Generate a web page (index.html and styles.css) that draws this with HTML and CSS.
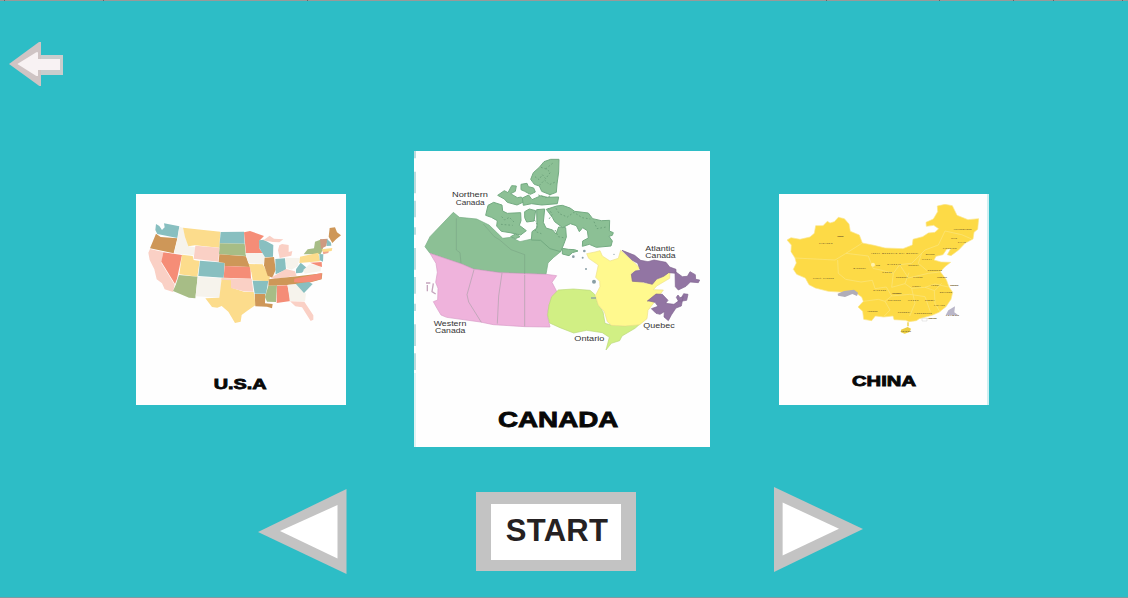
FILE: index.html
```html
<!DOCTYPE html>
<html lang="en">
<head>
<meta charset="utf-8">
<title>Choose a country</title>
<link rel="stylesheet" href="styles.css">
</head>
<body>
<div class="screen">
  <header class="top">
    <svg class="ruler" viewBox="0 0 1128 1"><path d="M4 0h1v1h-1zM103 0h1v1h-1zM307 0h1v1h-1zM826 0h1v1h-1zM939 0h1v1h-1zM1013 0h1v1h-1zM1053 0h1v1h-1zM1122 0h1v1h-1z" fill="#666"/></svg>
    <button class="back" aria-label="Back">
      <svg class="back-icon" viewBox="27 123 162 138">
        <path d="M123 165h66v60h-66z" fill="#c9cdcd"/>
        <path d="M27 192L117 126H123V258H118Z" fill="#cfc4c4"/>
        <path d="M52 192L109 157H114V177H180V210H114V228H109Z" fill="#f8f2f3"/>
      </svg>
    </button>
  </header>

  <main class="carousel">
    <article class="card side">
      <svg class="map" viewBox="18 12 630 633">
        <g class="art" stroke-width="1" stroke-linejoin="round">
          <path d="M78 102l10 6 8 12 8-8-2-12 46 9-6 35-60-12-6-12z" fill="#88bfc0"/>
          <path d="M78 131l14 10 50 4-11 45-71-15z" fill="#ce9758"/>
          <path d="M148 110l11 3 7 28 10 28 20 3-4 24-60-6 11-45z" fill="#f6f3ec"/>
          <path d="M159 113l55 6 57 6-3 48-73-7-20 3-10-28z" fill="#fcdc8c"/>
          <path d="M272 126l70-1 2 36-75-1z" fill="#88bfc0"/>
          <path d="M269 160l75 1 4 37-81-5z" fill="#a7bd86"/>
          <path d="M196 167l72 6-3 42-74-9z" fill="#fad0c5"/>
          <path d="M342 127l18-4 42 15-14 14 1 25 10 12-51 1z" fill="#f58d77"/>
          <path d="M60 177l40 9-6 33 40 65-5 22-25-8-8-18-16-12-7-30-14-28-4-22z" fill="#fad0c5"/>
          <path d="M100 187l56 8-15 71-6 16-41-67z" fill="#f58d77"/>
          <path d="M156 194l32 4 3 12 18 3-7 47-54-7z" fill="#fcdc8c"/>
          <path d="M210 212l74 6-3 45-76-5z" fill="#88bfc0"/>
          <path d="M268 193l80 6 12 32-76-3v-9l-18-3z" fill="#ce9758"/>
          <path d="M284 228l77 3 2 35-82-3z" fill="#f58d77"/>
          <path d="M147 255l56 5-7 65-19-2-48-20 8-18z" fill="#a7bd86"/>
          <path d="M203 260l72 5-5 58-73-4z" fill="#f6f3ec"/>
          <path d="M275 265l33 1-3 27 37 12 29 1 6 39-26 18-16 12-3 20-17 4-20-34-20-17-13 5-16-2-20-26 42-2z" fill="#fcdc8c"/>
          <path d="M275 265l90 1 5 39-29-1-38-10v-23l-29-2z" fill="#fad0c5"/>
          <path d="M346 190h51l10 16-7 16-45-2z" fill="#f6f3ec"/>
          <path d="M356 222l42 1 22 40-6 11-46-3-4-24z" fill="#fcdc8c"/>
          <path d="M387 151l14-2 29 16-1 35-24 2-17-28z" fill="#88bfc0"/>
          <path d="M400 151l19-14 13 9 28 2-12 9-20-1z" fill="#fad0c5"/>
          <path d="M448 166l8-4 20 3v21l11-3-3 14-35 7-5-23z" fill="#fad0c5"/>
          <path d="M404 203l28-2 5 38-10 24-14-6-11-31z" fill="#ce9758"/>
          <path d="M436 207l29-2 3 34-31 14z" fill="#88bfc0"/>
          <path d="M466 203l43 1-6 25-18 10-15-5z" fill="#f6f3ec"/>
          <path d="M421 264l47-27 27 7 5 13-65 10z" fill="#fad0c5"/>
          <path d="M368 272l47 1-7 38h-34z" fill="#88bfc0"/>
          <path d="M374 312h32l-1 28 23 2-2 13-15-5-35-1z" fill="#ce9758"/>
          <path d="M415 287l26-1-3 50-27-1-6-14z" fill="#a7bd86"/>
          <path d="M416 268l86-9 75-9-2 18-38 10-62 7-60 2z" fill="#ce9758"/>
          <path d="M493 266l82-17-1 18-42 11-40-1z" fill="#f58d77"/>
          <path d="M441 287l31-1 10 47-42 6z" fill="#f58d77"/>
          <path d="M473 284l26-1 29 28-3 23-46-1z" fill="#f6f3ec"/>
          <path d="M497 281l40-5 11 6-26 27z" fill="#88bfc0"/>
          <path d="M480 334l43 1 27 41v13l-8 4-26-41-20-3z" fill="#fad0c5"/>
          <path d="M498 238l14-20 18 15-14 15-18 2z" fill="#88bfc0"/>
          <path d="M520 240l18-17 36 3-2 18-48 7z" fill="#f6f3ec"/>
          <path d="M521 193l12-15 19-3 3-20 20-7 4 30-7 14z" fill="#a7bd86"/>
          <path d="M510 200l55-12 5 26-62 5z" fill="#fcdc8c"/>
          <path d="M568 192l12 1-1 22-10-4z" fill="#88bfc0"/>
          <path d="M540 218l35-2 1 15-12-4z" fill="#f58d77"/>
          <path d="M577 180l20 1-2 8-15 4z" fill="#f0a58d"/>
          <path d="M575 178l32-4-2 9-25 3z" fill="#fcdc8c"/>
          <path d="M570 148l23-2-4 22-16 9z" fill="#ce9a80"/>
          <path d="M591 147l12 11 1 9-14 1z" fill="#88bfc0"/>
          <path d="M596 140l3-26 16-2 6 15 12 9-14 11-12 12z" fill="#ce9758"/>
        </g>
        <text class="caption" x="251" y="598" font-size="46" textLength="159" lengthAdjust="spacingAndGlyphs">U.S.A</text>
      </svg>
    </article>

    <article class="card main">
      <svg class="map" viewBox="12 18 888 888">
        <path d="M15 18V684" stroke="#bddbdd" stroke-width="6" stroke-dasharray="22 40 65 22 50 30"/>
        <path d="M15 684V906" stroke="#e0f3f4" stroke-width="6"/>
        <g class="art">
          <path d="M45 305L60 275 82 252 130 202 148 217 200 222 237 240 260 262 278 280 303 277 330 290 365 282 385 270 410 290 440 310 452 320 430 338 414 354 408 388 270 383 190 372 155 357 60 325Z" fill="#8cc095" stroke="#73aa81" stroke-width="2"/>
          <g transform="translate(210 21)" fill="#8cc095" stroke="#73aa81" stroke-width="3" stroke-linejoin="round">
            <path d="M152 82L160 62 178 46 192 29 212 22 237 22 236 60 231 96 229 121 210 128 185 118 178 102 163 97Z"/>
            <path d="M17 190L24 160 41 151 66 159 68 177 82 184 122 182 123 206 118 220 139 236 122 249 90 242 64 238 50 222 52 206 34 196Z"/>
            <path d="M53 130l20-14 11 6 11-21 14 1-3 16-14 7 20 12 12-2 11 13-24 11-29-8-9-10z"/>
            <path d="M123 97l18-3 4 10 16 4 5 12-15 7-17-9-11-5zM127 138l19-9 10 14 27-12 18 5 35-1-4 20-47 4-30-4-25 5z"/>
            <path d="M134 179l14-8 19 5-5 31-22 3-6-13z"/>
            <path d="M170 173l24-2-4 40 8 17 20 6 10 12 8-21 21 2 2 28-7 20-10 24-32-9-28-25-28-1 2-25 15-11z"/>
            <path d="M199 172l31-10 17-2 23 8 14 10 41 5 13 17 26 6 25-1-1 32 12 5-3 8-10 3 10 14-4 15-44 4-21-9-21 6 1-16 17-9-3-22-14-9-10 12-9-18-18-6-23 12-24-18-7-13z"/>
            <path d="M247 289l18 3 19 1 10 4-17 5-10 9-20-5zM92 254l15-8 13 8-14 6z"/>
          </g>
          <path d="M375 95l12 9 10-15 10 12 14-19-13-11 22-18M393 67l16 5M388 121l16-16 14 14 18-8M275 215l9 10 14-8 16 16M273 238l35 3M385 150l22 8 18-7M415 190l12 18-10 14M438 190l10 16 24 10 20-14 24 16 25 4M552 230l9 21 28-5M373 225l10 14-8 20 19 7M435 255l10 20 19 4" fill="none" stroke="#6ea37c" stroke-width="3" stroke-dasharray="5 6"/>
          <path d="M60 325L155 357 190 372 270 383 408 388 440 392 426 412 441 441 417 480 412 510 420 546 345 545 250 539 211 531 110 517 93 510 81 490 70 470 83 465 84 430 77 412 82 382 78 355Z" fill="#efb3dc" stroke="#d89bc7" stroke-width="2"/>
          <path d="M139 220V315L150 323 153 355M220 237l33 38 15 9 35 30 41 15V387M192 374l-21 75 5 22 38 61M276 384l-10 69-4 83M344 389v155" fill="none" stroke="#6d8f79" stroke-opacity=".5" stroke-width="2"/>
          <path d="M48 414h13M52 420v19M70 415l-4 25 11 7" stroke="#c5a5bd" stroke-width="4" fill="none"/>
          <path d="M425 455L445 435 490 432 540 436 554 448 565 480 579 500 585 535 603 540 645 543 691 536 675 550 636 573 629 587 604 595 588 615 598 577 577 563 530 556 491 564 450 548 419 534 413 510 417 480Z" fill="#d1ef84" stroke="#bad878" stroke-width="2"/>
          <path d="M530 326L555 321 570 317 577 333 600 348 625 340 632 316 670 350 690 370 680 377 665 383 667 405 710 416 750 400 780 379 779 400 740 423 730 434 760 435 738 465 714 496 711 521 689 539 645 543 605 541 592 530 583 500 565 480 556 452 570 425 569 409 557 397 565 360 536 340Z" fill="#fff98e" stroke="#eee18a" stroke-width="2"/>
          <g fill="#9275a3" stroke="#7f648f" stroke-width="2">
            <path d="M636 316L674 331 692 346 714 350 732 345 768 352 779 366 798 373 798 385 776 383 761 394 740 402 727 418 700 411 667 409 664 388 676 378 691 376 683 355 667 346Z"/>
            <path d="M795 379l22 16 15-1 8-14 16 9 1 14 12 2-4 8-24-2-13 13-23 11-9-10z"/>
            <path d="M712 468l26-21 19 1 17 18-7 9 25 3 20-15 9-17 13 2-4 18-13 2-3 15-16 6-14 21-9 17-13-11 1-16-13 8-12-3-14-14 20-7-9-12-18-4z"/>
            <path d="M799 457l5-7 6 8 10-3-3 13h-12z"/>
          </g>
          <g fill="#899ea6"><circle cx="523" cy="318" r="4"/><circle cx="518" cy="338" r="3"/><circle cx="490" cy="335" r="4"/><circle cx="612" cy="328" r="2"/><circle cx="528" cy="372" r="3"/><circle cx="552" cy="410" r="6"/><path d="M543 457h15v4h-15z"/></g>
        </g>
        <g class="place">
          <text x="126" y="157" textLength="108" lengthAdjust="spacingAndGlyphs">Northern</text>
          <text x="137" y="180" textLength="87" lengthAdjust="spacingAndGlyphs">Canada</text>
          <text x="706" y="317" textLength="88" lengthAdjust="spacingAndGlyphs">Atlantic</text>
          <text x="706" y="338" textLength="91" lengthAdjust="spacingAndGlyphs">Canada</text>
          <text x="71" y="543" textLength="98" lengthAdjust="spacingAndGlyphs">Western</text>
          <text x="75" y="565" textLength="91" lengthAdjust="spacingAndGlyphs">Canada</text>
          <text x="493" y="589" textLength="90" lengthAdjust="spacingAndGlyphs">Ontario</text>
          <text x="700" y="550" textLength="94" lengthAdjust="spacingAndGlyphs">Quebec</text>
        </g>
        <text class="caption" x="264" y="847" font-size="65" textLength="361" lengthAdjust="spacingAndGlyphs">CANADA</text>
      </svg>
    </article>

    <article class="card side">
      <svg class="map" viewBox="12 12 630 633">
        <path d="M639 12V645" stroke="#cdeff1" stroke-width="6"/>
        <g class="art">
          <path d="M36 150L48 143 75 148 105 141 118 130 122 107 144 107 157 94 165 99 178 95 190 82 208 86 222 102 226 124 253 135 262 159 297 166 330 174 384 176 412 165 414 148 443 140 460 129 480 127 491 116 476 106 454 109 453 97 475 87 488 65 487 48 510 43 532 47 546 76 579 89 611 86 608 118 597 127 594 147 570 160 551 180 528 197 517 194 527 176 515 178 504 194 483 199 477 210 498 216 527 217 510 230 496 245 514 269 522 291 533 307 528 328 513 350 492 367 471 376 433 386 424 392 402 395 392 391 357 389 354 378 326 381 301 378 290 392 266 388 263 364 249 351 265 334 260 321 243 309 208 307 160 304 121 294 102 284 91 264 65 253 55 238 64 219 60 204 48 185 49 165Z" fill="#fdda46" stroke="#fbe58d" stroke-width="2" stroke-linejoin="round"/>
          <path d="M60 204L180 210 213 190 262 159M188 210L190 250 212 268 258 276 292 271 300 296 334 291 350 318 330 334 345 360 326 380M213 190L280 198 294 235 325 242 355 250 374 224 410 220 450 180 490 165 510 123 560 134 590 147M355 250L350 292 390 281 410 295 450 292 479 302 500 280M374 224L400 264 460 250 494 246M440 190L430 220 456 242M410 295L420 340 404 378M350 318L404 313 450 320 466 365M478 302L480 340 495 366M265 334L310 328 330 334M390 281L402 248M520 291L480 282 450 292" fill="none" stroke="#fbe680" stroke-width="2"/>
          <circle cx="294" cy="224" r="6" fill="#fff2ae"/>
          <path d="M188 311L207 303 237 299 249 308 246 318 232 312 210 321 189 317Z" fill="#b0adb9"/>
          <path d="M540 349l-2 18 14 10-40-1 8-15z" fill="#b9b6c8"/>
          <path d="M378 419l20-8 10 5-4 10-15 5-11-4zM397 397h4v12h-4z" fill="#ecce40"/>
          <path d="M441 385h15v8h-15z" fill="#fff" stroke="#bbb"/>
        </g>
        <g class="city">
          <text x="187" y="140" textLength="18">Urumqi</text><text x="132" y="162" textLength="40">Xinjiang</text><text x="114" y="268" textLength="62">Tibet Xizang</text><text x="235" y="236" textLength="37">Qinghai</text><text x="289" y="193" textLength="140">Inner Mongolia Nei Mongol</text><text x="303" y="227" textLength="12">Xin</text><text x="337" y="226" textLength="40">Ningxia</text><text x="322" y="249" textLength="28">Gansu</text><text x="363" y="263" textLength="34">Shaanxi</text><text x="400" y="229" textLength="30">Shanxi</text><text x="452" y="194" textLength="26">Beijing</text><text x="441" y="209" textLength="28">Hebei</text><text x="458" y="242" textLength="43">Shandong</text><text x="415" y="263" textLength="27">Henan</text><text x="412" y="292" textLength="24">Hubei</text><text x="467" y="287" textLength="25">Anhui</text><text x="486" y="264" textLength="30">Jiangsu</text><text x="525" y="289" textLength="25">Shanghai</text><text x="494" y="310" textLength="37">Zhejiang</text><text x="295" y="303" textLength="38">Sichuan</text><text x="351" y="311" textLength="28">Chongqing</text><text x="339" y="334" textLength="38">Guizhou</text><text x="399" y="334" textLength="31">Hunan</text><text x="449" y="333" textLength="29">Jiangxi</text><text x="477" y="347" textLength="32">Fujian</text><text x="277" y="365" textLength="30">Yunnan</text><text x="368" y="370" textLength="37">Guangxi</text><text x="418" y="373" textLength="52">Guangdong</text><text x="458" y="388" textLength="27">Hong Kong</text><text x="512" y="377" textLength="40">Taiwan</text><text x="377" y="426" textLength="31">Hainan</text><text x="536" y="119" textLength="53">Heilongjiang</text><text x="548" y="160" textLength="24">Jilin</text><text x="504" y="178" textLength="40">Liaoning</text><text x="528" y="146" textLength="18">Jilin</text>
        </g>
        <text class="caption" x="231" y="589" font-size="44" textLength="192" lengthAdjust="spacingAndGlyphs">CHINA</text>
      </svg>
    </article>
  </main>

  <nav class="controls">
    <button class="prev" aria-label="Previous">
      <svg class="arrow" viewBox="0 0 89 85"><path d="M0 43L88.500 0V85Z" fill="#c3c3c3"/><path d="M22 42L79.500 16V69.500Z" fill="#fff"/></svg>
    </button>
    <button class="start">START</button>
    <button class="next" aria-label="Next">
      <svg class="arrow" viewBox="0 0 90 85"><path d="M0 0L89 42 0 85Z" fill="#c3c3c3"/><path d="M8.600 15.500L65 41.700 8.600 68.500Z" fill="#fff"/></svg>
    </button>
  </nav>
</div>
</body>
</html>
```
FILE: styles.css
```css
* { box-sizing: border-box; }
body { margin: 0; }
.screen {
  display: flex;
  flex-direction: column;
  width: 1128px;
  height: 598px;
  overflow: hidden;
  background: #2dbdc6;
  border-bottom: 1px solid #779da3;
  font-family: "Liberation Sans", Arial, sans-serif;
}
button { padding: 0; border: 0; background: none; }
svg { display: block; }
.top { height: 151px; flex: none; }
.ruler { width: 1128px; height: 1px; background: #999; }
.back { display: block; margin: 40px 0 0 9px; }
.back-icon { width: 54px; height: 46px; }
.carousel {
  display: flex;
  align-items: flex-start;
  height: 336px;
  flex: none;
  padding-left: 136px;
}
.card { flex: none; background: #fefefe; }
.side { width: 210px; height: 211px; margin-top: 43px; }
.main { width: 296px; height: 296px; margin: 0 69px 0 68px; }
.map { width: 100%; height: 100%; }
.art { filter: blur(1.2px); }
.caption {
  font-family: "Liberation Sans", Arial, sans-serif;
  font-weight: 700;
  fill: #080808;
  stroke: #080808;
  stroke-width: 2.5px;
}
.place { font-size: 22px; fill: #333; }
.city { font-size: 7px; font-weight: 700; fill: #75602a; }
.controls {
  display: flex;
  align-items: flex-start;
  padding-left: 258px;
}
.prev { width: 89px; height: 85px; margin-top: 2px; }
.next { width: 90px; height: 85px; margin-left: 138px; }
.arrow { width: 100%; height: 100%; }
.start {
  width: 160px;
  height: 79px;
  margin: 5px 0 0 129px;
  padding: 0 0 3px 2px;
  border: solid #c3c3c3;
  border-width: 12px 15px 11px;
  background: #fff;
  color: #252122;
  font: 700 31px/53px "Liberation Sans", Arial, sans-serif;
  letter-spacing: 0.3px;
}
```
